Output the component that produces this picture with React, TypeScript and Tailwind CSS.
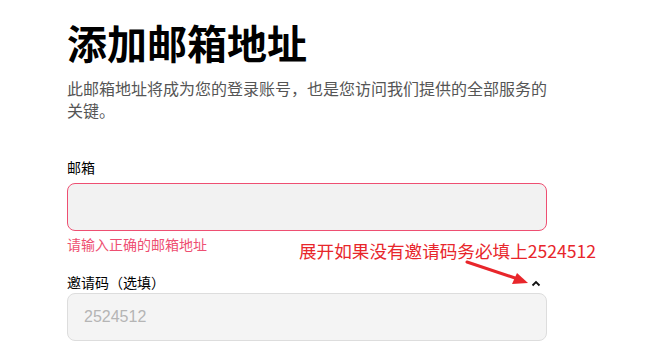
import React from 'react';

const cjk = '"Noto Sans CJK SC", "Noto Sans", sans-serif';

export default function App() {
  return (
    <div className="relative w-[648px] h-[363px] overflow-hidden bg-white" style={{ fontFamily: cjk }}>
      <div className="w-[480px] ml-[67px] pt-[18px]">
        {/* Header */}
        <h1 className="text-[40px] leading-[48px] font-bold text-black">添加邮箱地址</h1>
        <p className="mt-[11px] text-[16px] leading-[22px] text-[#555555]">
          此邮箱地址将成为您的登录账号，也是您访问我们提供的全部服务的关键。
        </p>

        {/* Email */}
        <label className="block mt-[36px] text-[14px] leading-[20px] text-black">邮箱</label>
        <div className="mt-[6px] h-[48px] rounded-[8px] border border-[#ee4f72] bg-[#f2f2f2]" />
        <p className="mt-[3px] text-[14px] leading-[20px] text-[#ee4f72]">请输入正确的邮箱地址</p>

        {/* Invite code */}
        <div className="mt-[18px] flex items-center justify-between h-[20px]">
          <span className="text-[14px] leading-[20px] text-black">邀请码（选填）</span>
          <svg width="10" height="7" viewBox="0 0 10 7" className="mr-[6px] mt-[2px]">
            <path d="M1.5 5.5 L5 2 L8.5 5.5" fill="none" stroke="#111" strokeWidth="1.8" />
          </svg>
        </div>
        <div className="mt-[1px] h-[48px] rounded-[8px] border border-[#dddddd] bg-[#f4f4f4] flex items-center px-[16px]">
          <span className="text-[16px] text-[#b5b5b5]" style={{ fontFamily: '"Liberation Sans", Arial, sans-serif' }}>
            2524512
          </span>
        </div>
      </div>

      {/* Annotation overlay */}
      <div className="absolute left-[299px] top-[239px] text-[17.6px] leading-[24px] text-[#e8262b] whitespace-nowrap">
        展开如果没有邀请码务必填上2524512
      </div>
      <svg className="absolute left-0 top-0" width="648" height="363" viewBox="0 0 648 363">
        <line x1="467" y1="262" x2="518" y2="279" stroke="#e8262b" strokeWidth="3" strokeLinecap="round" />
        <polygon points="528,283 512,284 517,273" fill="#e8262b" />
      </svg>
    </div>
  );
}
